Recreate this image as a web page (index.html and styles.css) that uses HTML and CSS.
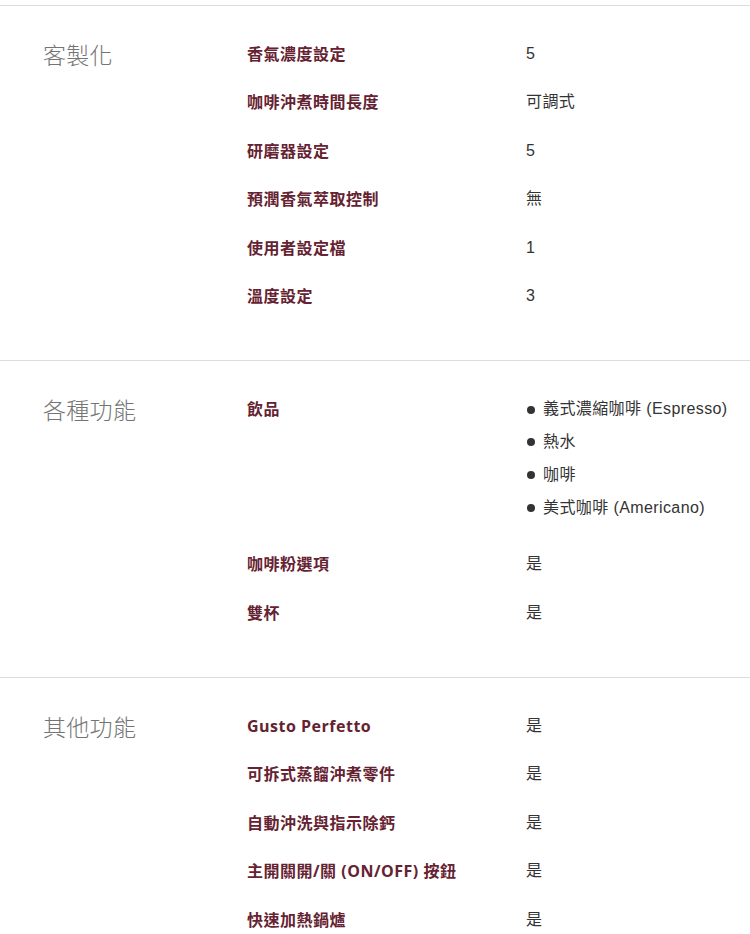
FILE: index.html
```html
<!DOCTYPE html>
<html lang="zh-Hant">
<head>
<meta charset="utf-8">
<title>規格</title>
<link rel="stylesheet" href="styles.css">
</head>
<body>
<div class="specs">
  <section class="spec">
    <h3 class="spec-title">客製化</h3>
    <div class="spec-rows">
      <div class="row"><div class="label">香氣濃度設定</div><div class="value">5</div></div>
      <div class="row"><div class="label">咖啡沖煮時間長度</div><div class="value">可調式</div></div>
      <div class="row"><div class="label">研磨器設定</div><div class="value">5</div></div>
      <div class="row"><div class="label">預潤香氣萃取控制</div><div class="value">無</div></div>
      <div class="row"><div class="label">使用者設定檔</div><div class="value">1</div></div>
      <div class="row"><div class="label">溫度設定</div><div class="value">3</div></div>
    </div>
  </section>
  <section class="spec">
    <h3 class="spec-title">各種功能</h3>
    <div class="spec-rows">
      <div class="row"><div class="label">飲品</div>
        <ul class="value list">
          <li>義式濃縮咖啡 (Espresso)</li>
          <li>熱水</li>
          <li>咖啡</li>
          <li>美式咖啡 (Americano)</li>
        </ul>
      </div>
      <div class="row"><div class="label">咖啡粉選項</div><div class="value">是</div></div>
      <div class="row"><div class="label">雙杯</div><div class="value">是</div></div>
    </div>
  </section>
  <section class="spec">
    <h3 class="spec-title">其他功能</h3>
    <div class="spec-rows">
      <div class="row"><div class="label">Gusto Perfetto</div><div class="value">是</div></div>
      <div class="row"><div class="label">可拆式蒸餾沖煮零件</div><div class="value">是</div></div>
      <div class="row"><div class="label">自動沖洗與指示除鈣</div><div class="value">是</div></div>
      <div class="row"><div class="label">主開關開/關 (ON/OFF) 按鈕</div><div class="value">是</div></div>
      <div class="row"><div class="label">快速加熱鍋爐</div><div class="value">是</div></div>
    </div>
  </section>
</div>
</body>
</html>
```
FILE: styles.css
```css
html, body {
  margin: 0;
  padding: 0;
  background: #ffffff;
}

body {
  font-family: "Liberation Sans", "Noto Sans CJK TC", sans-serif;
  color: #333333;
}

.specs {
  padding-top: 5px;
}

.spec {
  display: flex;
  border-top: 1px solid #dcdcdc;
  padding: 24px 0 40px 43px;
}

.spec-title {
  flex: 0 0 204px;
  margin: 0;
  font-family: "Noto Sans CJK TC", sans-serif;
  font-weight: 200;
  font-size: 23px;
  line-height: 48px;
  letter-spacing: 0.3px;
  color: #747474;
}

.spec-rows {
  flex: 1;
  display: flex;
  flex-direction: column;
}

.row {
  display: grid;
  grid-template-columns: 279px 1fr;
}

.label {
  font-family: "Open Sans", "Noto Sans CJK TC", sans-serif;
  font-weight: 700;
  font-size: 16px;
  line-height: 24.4px;
  letter-spacing: 0.5px;
  padding: 12px 0;
  color: #652231;
}

.value {
  font-family: "Liberation Sans", "Noto Sans CJK TC", sans-serif;
  font-size: 16px;
  line-height: 24.4px;
  letter-spacing: 0.4px;
  padding: 12px 0;
  color: #333333;
}

.list {
  list-style: none;
  margin: 0;
  padding: 8px 0 16px 0;
}

.list li {
  display: flex;
  align-items: center;
  gap: 8px;
  line-height: 32.7px;
}

.list li::before {
  content: "";
  flex: 0 0 8px;
  width: 8px;
  height: 8px;
  margin-left: 1px;
  border-radius: 50%;
  background: #333333;
}
```
